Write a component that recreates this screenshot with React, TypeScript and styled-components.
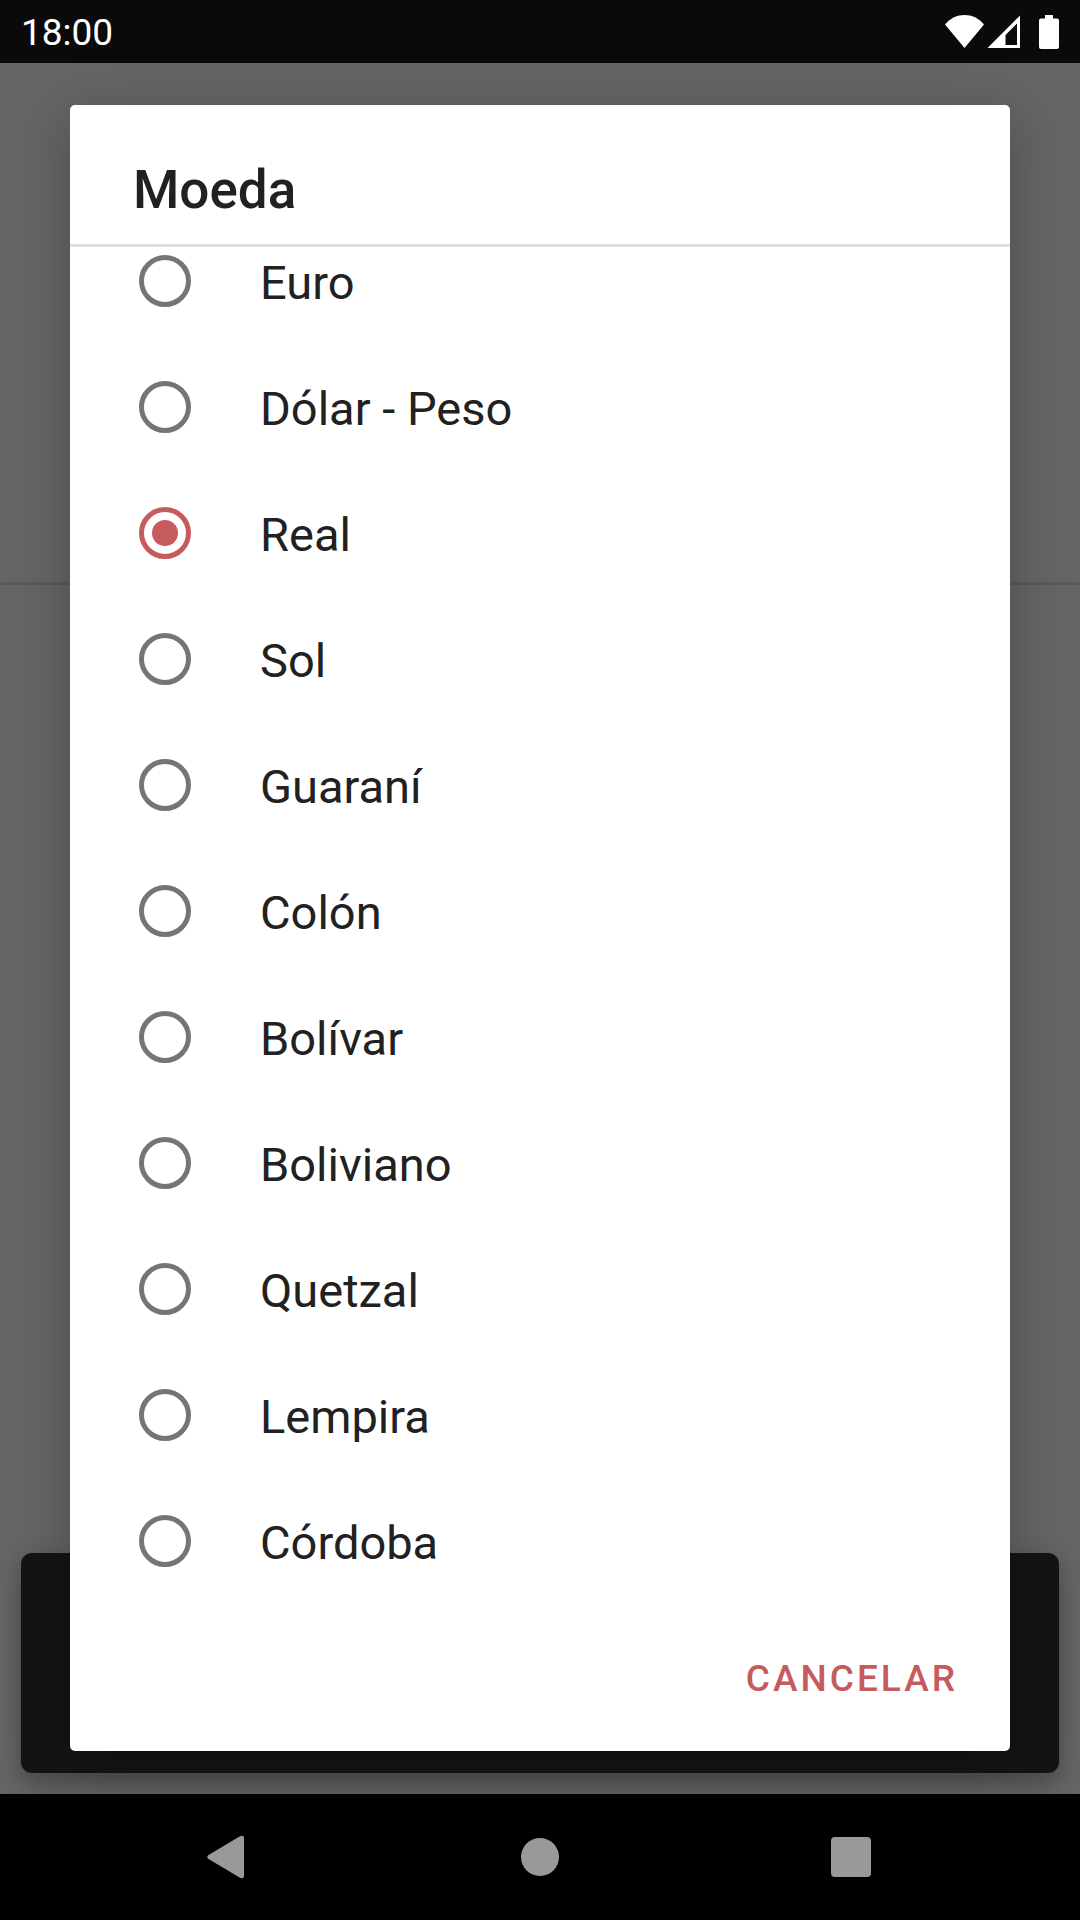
import React, { useState } from "react";
import styled, { createGlobalStyle } from "styled-components";

const ACCENT = "#c65b5d";

const GlobalStyle = createGlobalStyle`
  *, *::before, *::after { box-sizing: border-box; }
  body { margin: 0; background: #000; font-family: Roboto, "Noto Sans", sans-serif; }
`;

const Page = styled.div`
  display: flex;
  flex-direction: column;
  height: 100vh;
`;

const StatusBar = styled.header`
  display: flex;
  align-items: center;
  justify-content: space-between;
  flex: none;
  height: 63px;
  padding: 0 21px;
  background: #0a0a0a;
  color: #fff;
`;

const Clock = styled.time`
  padding-top: 3px;
  font-size: 37px;
  line-height: 44px;
`;

const StatusIcons = styled.div`
  display: flex;
  align-items: center;
  gap: 4px;

  svg { display: block; }
  svg:last-child { margin-left: 15px; }
`;

const Stage = styled.main`
  display: grid;
  flex: 1;
  min-height: 0;
  grid-template: minmax(0, 1fr) / minmax(0, 1fr);
  overflow: hidden;
  background: #656565;

  > * { grid-area: 1 / 1; }
`;

const Behind = styled.div`
  display: flex;
  flex-direction: column;
  justify-content: space-between;
  padding-bottom: 21px;
`;

const HeaderArea = styled.div`
  min-height: 522px;
  border-bottom: 3px solid #5a5a5a;
`;

const Snackbar = styled.div`
  min-height: 220px;
  margin: 0 21px;
  border-radius: 11px;
  background: #141414;
  box-shadow: 0 10px 24px rgba(0, 0, 0, 0.3);
`;

const Dialog = styled.section`
  display: flex;
  flex-direction: column;
  margin: 42px 70px 43px;
  border-radius: 5px;
  background: #fff;
  color: #212121;
  overflow: hidden;
  box-shadow: 0 12px 56px rgba(0, 0, 0, 0.25);
`;

const Title = styled.h1`
  flex: none;
  margin: 0;
  padding: 54px 63px 23px;
  border-bottom: 3px solid #e0e0e0;
  font-size: 53px;
  line-height: 62px;
  font-weight: 500;
`;

/* Reversed column so the list opens scrolled to its last option. */
const Scroller = styled.div`
  display: flex;
  flex-direction: column-reverse;
  flex: 1;
  min-height: 0;
  overflow-y: auto;
  scrollbar-width: none;
`;

const Options = styled.fieldset`
  display: flex;
  flex-direction: column;
  flex: none;
  min-width: 0;
  margin: 0;
  padding: 0;
  border: 0;
`;

const Option = styled.label`
  display: flex;
  align-items: center;
  gap: 69px;
  height: 126px;
  padding: 0 69px;
  cursor: pointer;
`;

const Radio = styled.input`
  appearance: none;
  display: grid;
  place-items: center;
  flex: none;
  width: 52px;
  height: 52px;
  margin: 0;
  border: 5px solid #757575;
  border-radius: 50%;

  &:checked { border-color: ${ACCENT}; }
  &:checked::before {
    content: "";
    width: 26px;
    height: 26px;
    border-radius: 50%;
    background: ${ACCENT};
  }
`;

const OptionText = styled.span`
  padding-top: 4px;
  font-size: 47px;
  line-height: 56px;
`;

const Actions = styled.footer`
  display: flex;
  align-items: center;
  justify-content: flex-end;
  flex: none;
  height: 147px;
  padding: 2px 31px 0;
`;

const TextButton = styled.button`
  padding: 21px;
  border: 0;
  background: none;
  color: ${ACCENT};
  font-family: inherit;
  font-size: 37px;
  line-height: 44px;
  font-weight: 500;
  letter-spacing: 3px;
  text-transform: uppercase;
  cursor: pointer;
`;

const NavBar = styled.nav`
  display: grid;
  grid-template-columns: repeat(3, 1fr);
  flex: none;
  height: 126px;
  padding: 0 74px;
  background: #000;
`;

const NavButton = styled.button`
  display: grid;
  place-items: center;
  padding: 0;
  border: 0;
  background: none;
  color: #999;
`;

const currencies = [
  "Euro",
  "Dólar - Peso",
  "Real",
  "Sol",
  "Guaraní",
  "Colón",
  "Bolívar",
  "Boliviano",
  "Quetzal",
  "Lempira",
  "Córdoba",
];

const WifiIcon = () => (
  <svg width="39" height="34" viewBox="0 0 39 34" fill="currentColor" aria-hidden="true">
    <path d="M0 9.5C5.5 3 12 0 19.5 0S33.500 3 39 9.500L19.500 33Z" />
  </svg>
);

const SignalIcon = () => (
  <svg width="32" height="34" viewBox="0 0 32 34" fill="currentColor" aria-hidden="true">
    <path fillRule="evenodd" d="M32 0.500V33H-0.500ZM29 8.500L17.500 20V30H29Z" />
  </svg>
);

const BatteryIcon = () => (
  <svg width="20" height="34" viewBox="0 0 20 34" fill="currentColor" aria-hidden="true">
    <path d="M6 0H14V3.500H18Q20 3.500 20 5.500V32Q20 34 18 34H2Q0 34 0 32V5.500Q0 3.500 2 3.500H6Z" />
  </svg>
);

const BackIcon = () => (
  <svg width="64" height="64" viewBox="0 0 64 64" fill="currentColor" aria-hidden="true">
    <path d="M43 11.300Q47 9.500 47 13V51Q47 54.500 43 52.700L11.500 34Q9 32 11.500 30Z" />
  </svg>
);

const HomeIcon = () => (
  <svg width="64" height="64" viewBox="0 0 64 64" fill="currentColor" aria-hidden="true">
    <circle cx="32" cy="32" r="19" />
  </svg>
);

const RecentsIcon = () => (
  <svg width="64" height="64" viewBox="0 0 64 64" fill="currentColor" aria-hidden="true">
    <rect x="12" y="12" width="40" height="40" rx="4" />
  </svg>
);

export default function App() {
  const [selected, setSelected] = useState("Real");

  return (
    <Page>
      <GlobalStyle />
      <StatusBar>
        <Clock>18:00</Clock>
        <StatusIcons>
          <WifiIcon />
          <SignalIcon />
          <BatteryIcon />
        </StatusIcons>
      </StatusBar>
      <Stage>
        <Behind>
          <HeaderArea />
          <Snackbar />
        </Behind>
        <Dialog role="dialog" aria-labelledby="dialog-title">
          <Title id="dialog-title">Moeda</Title>
          <Scroller>
            <Options aria-labelledby="dialog-title">
              {currencies.map((name, index) => (
                <Option key={name} htmlFor={`currency-${index}`}>
                  <Radio
                    type="radio"
                    id={`currency-${index}`}
                    name="currency"
                    value={name}
                    checked={selected === name}
                    onChange={() => setSelected(name)}
                  />
                  <OptionText>{name}</OptionText>
                </Option>
              ))}
            </Options>
          </Scroller>
          <Actions>
            <TextButton type="button">Cancelar</TextButton>
          </Actions>
        </Dialog>
      </Stage>
      <NavBar>
        <NavButton type="button" aria-label="Voltar">
          <BackIcon />
        </NavButton>
        <NavButton type="button" aria-label="Início">
          <HomeIcon />
        </NavButton>
        <NavButton type="button" aria-label="Recentes">
          <RecentsIcon />
        </NavButton>
      </NavBar>
    </Page>
  );
}
